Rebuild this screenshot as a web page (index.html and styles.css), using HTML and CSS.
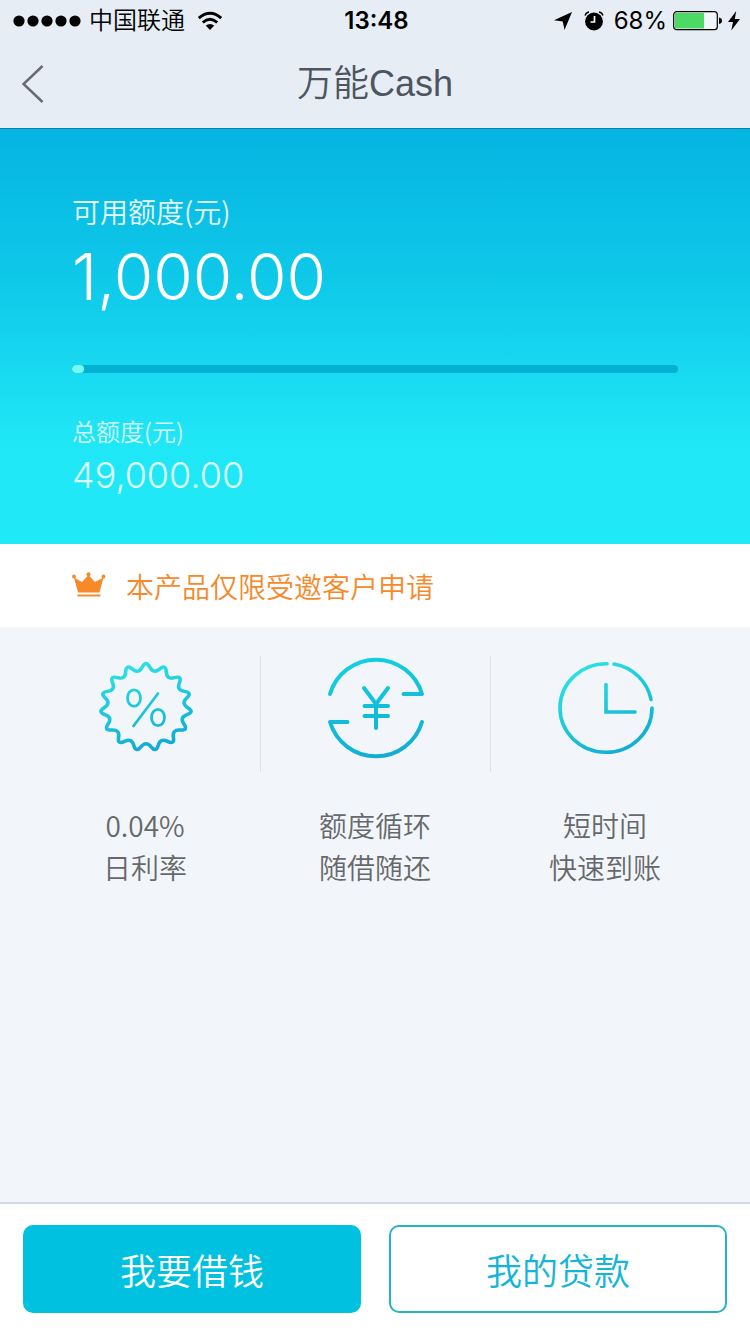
FILE: index.html
```html
<!DOCTYPE html>
<html lang="zh-CN">
<head>
<meta charset="utf-8">
<meta name="viewport" content="width=device-width, initial-scale=1">
<title>万能Cash</title>
<link rel="stylesheet" href="styles.css">
</head>
<body>
<header class="top">
  <div class="status">
    <div class="status-left">
      <svg class="signal" width="68" height="12" viewBox="0 0 68 12" aria-hidden="true"><circle cx="6" cy="6" r="5.6"/><circle cx="20" cy="6" r="5.6"/><circle cx="34" cy="6" r="5.6"/><circle cx="48" cy="6" r="5.6"/><circle cx="62" cy="6" r="5.6"/></svg>
      <span class="carrier">中国联通</span>
      <svg width="26" height="20" viewBox="0 0 26 20" aria-hidden="true"><g fill="none" stroke="#000" stroke-width="2.9"><path d="M1.8 7.2Q13-2.6 24.2 7.2"/><path d="M5.8 11.5Q13 5.2 20.2 11.5"/></g><path d="M8.8 14.6Q13 11.2 17.2 14.6L13 19Z"/></svg>
    </div>
    <time class="clock">13:48</time>
    <div class="status-right">
      <svg width="18" height="18" viewBox="0 0 18 18" aria-hidden="true"><path d="M18 0L10.500 18 8.800 9.400 0 8.200Z"/></svg>
      <svg class="alarm" width="20" height="20" viewBox="0 0 20 20" aria-hidden="true"><circle cx="10" cy="10.500" r="8.900"/><path d="M1 4.500Q2 1.500 5 1M15 1Q18 1.500 19 4.500" fill="none" stroke="#000" stroke-width="1.400"/><path d="M10.500 5V11H6.500" fill="none" stroke="#fff" stroke-width="1.700"/></svg>
      <span class="percent">68%</span>
      <svg class="battery" width="49" height="20" viewBox="0 0 49 20" aria-hidden="true"><rect x=".7" y=".7" width="43.600" height="18" rx="3" fill="#f0f6fa" stroke="#000" stroke-width="1.200"/><path d="M2 2H31V17.400H2Z" fill="#4cd964"/><path d="M46 6.500Q49 7 49 9.700T46 13Z"/></svg>
      <svg width="12" height="20" viewBox="0 0 12 20" aria-hidden="true"><path d="M8.200 0L0 11H5L3.300 19.500 12 8H6.800Z"/></svg>
    </div>
  </div>
  <nav class="nav">
    <button class="back" type="button" aria-label="返回"><svg width="22" height="38" viewBox="0 0 22 38" aria-hidden="true"><path d="M20.500 1L1.500 19 20.500 37" fill="none" stroke="#666b73" stroke-width="2.500"/></svg></button>
    <h1 class="title">万能Cash</h1>
  </nav>
</header>
<main class="main">
  <section class="hero">
    <label class="label" for="quota">可用额度(元)</label>
    <p class="amount">1,000.00</p>
    <progress class="bar" id="quota" max="49000" value="1000"></progress>
    <p class="label-small">总额度(元)</p>
    <p class="total">49,000.00</p>
  </section>
  <p class="notice">
    <svg width="34" height="28" viewBox="0 0 34 28" fill="#f68a2b" aria-hidden="true"><path d="M2 5.500L10 10 16.500 3 23 10 31.500 5.500 27.500 20.500H6Z"/><rect x="5.500" y="22.500" width="23" height="2"/><circle cx="2" cy="4.500" r="1.900"/><circle cx="16.500" cy="2.200" r="2"/><circle cx="31.500" cy="4.500" r="1.900"/></svg>
    <span>本产品仅限受邀客户申请</span>
  </p>
  <ul class="features">
    <li class="feature">
      <div class="picture"><svg width="104" height="104" viewBox="-52 -52 104 104" fill="none" stroke="url(#g1)" stroke-width="3.600" stroke-linecap="round" aria-hidden="true">
        <defs><linearGradient id="g1" gradientUnits="userSpaceOnUse" x1="-12" y1="-47" x2="12" y2="47"><stop stop-color="#2de1e5"/><stop offset="1" stop-color="#0fa9d3"/></linearGradient></defs>
        <path stroke-linejoin="round" transform="translate(0 -1) scale(1 .96)" d="M-3.700-41.600Q0-49 3.700-41.600Q7.300-34.200 13.600-39.500Q19.900-44.800 20.300-36.600Q20.600-28.300 28.500-30.600Q36.400-32.800 33.400-25.200Q30.300-17.500 38.500-16.300Q46.600-15.100 40.700-9.400Q34.800-3.700 41.800.7Q48.700 5.100 41 8Q33.300 10.800 37.900 17.700Q42.400 24.500 34.200 24Q26 23.400 27.400 31.500Q28.800 39.600 21.500 35.800Q14.200 32 12.200 40Q10.200 47.900 5.100 41.500Q0 35-5.100 41.500Q-10.200 47.900-12.200 40Q-14.200 32-21.500 35.800Q-28.800 39.600-27.400 31.500Q-26 23.400-34.200 24Q-42.400 24.500-37.900 17.700Q-33.300 10.800-41 8Q-48.700 5.100-41.800.7Q-34.800-3.700-40.700-9.400Q-46.600-15.100-38.500-16.300Q-30.300-17.500-33.400-25.200Q-36.400-32.800-28.500-30.600Q-20.600-28.300-20.300-36.600Q-19.900-44.800-13.600-39.500Q-7.300-34.200-3.700-41.600Z"/>
        <g stroke-width="2.800"><ellipse cx="-12" cy="-10" rx="6.500" ry="8.200"/><ellipse cx="12" cy="9.500" rx="6.500" ry="8.200"/><path d="M12-14.500L-12.500 18"/></g>
      </svg></div>
      <p>0.04%<br>日利率</p>
    </li>
    <li class="feature">
      <div class="picture"><svg width="104" height="104" viewBox="-52 -52 104 104" fill="none" stroke="url(#g2)" stroke-width="4" stroke-linecap="round" stroke-linejoin="round" aria-hidden="true">
        <defs><linearGradient id="g2" gradientUnits="userSpaceOnUse" x1="-10" y1="-48" x2="10" y2="48"><stop stop-color="#12cfe2"/><stop offset="1" stop-color="#12aed2"/></linearGradient></defs>
        <path d="M-46-14A48 48 0 0 1 46-14H27.500M46 14A48 48 0 0 1-46 14H-28.500M-12-20L0-4 12-20M0-4V20M-11.500-2H12M-11.500 8H12"/>
      </svg></div>
      <p>额度循环<br>随借随还</p>
    </li>
    <li class="feature">
      <div class="picture"><svg width="104" height="104" viewBox="-52 -52 104 104" fill="none" stroke="url(#g3)" stroke-width="3.600" stroke-linecap="round" aria-hidden="true">
        <defs><linearGradient id="g3" gradientUnits="userSpaceOnUse" x1="-22" y1="-40" x2="22" y2="42"><stop stop-color="#2bdfe5"/><stop offset="1" stop-color="#10add3"/></linearGradient></defs>
        <path d="M1-44.300A46 44.300 0 1 0 46 0M8-44A46 44.300 0 0 1 45-8.500M0-23.500V4H29" stroke-linejoin="miter"/>
      </svg></div>
      <p>短时间<br>快速到账</p>
    </li>
  </ul>
</main>
<footer class="actions">
  <button class="button primary" type="button">我要借钱</button>
  <button class="button outline" type="button">我的贷款</button>
</footer>
</body>
</html>
```
FILE: styles.css
```css
* { box-sizing: border-box; }
body {
  margin: 0;
  min-height: 100vh;
  display: flex;
  flex-direction: column;
  background: #f2f6fa;
  font-family: "Noto Sans CJK SC", sans-serif;
  font-weight: 350;
}
h1, p, ul { margin: 0; padding: 0; }
button { font: inherit; cursor: pointer; }
svg { display: block; flex: none; }
.top {
  background: #e6edf5;
  border-bottom: 1px solid #087fa5;
}
.status {
  display: grid;
  grid-template-columns: 1fr auto 1fr;
  align-items: center;
  height: 42px;
  padding: 0 10px 0 13px;
  font-family: Inter, "Noto Sans CJK SC", sans-serif;
  font-size: 24px;
  line-height: 42px;
  color: #000;
}
.status-left, .status-right { display: flex; align-items: center; }
.status-left { gap: 12px; }
.carrier { margin-left: -4px; }
.status-right { justify-content: flex-end; gap: 6px; }
.clock { font-weight: 600; }
.alarm { margin: 0 4px 0 6px; }
.percent { font-weight: 400; }
.nav {
  display: grid;
  grid-template-columns: 60px 1fr 60px;
  align-items: center;
  height: 86px;
  padding-bottom: 2px;
}
.back {
  height: 84px;
  padding: 0 0 0 22px;
  border: 0;
  background: none;
}
.title {
  font-family: "Liberation Sans", "Noto Sans CJK SC", sans-serif;
  font-size: 36px;
  font-weight: 350;
  line-height: 84px;
  text-align: center;
  color: #4d555f;
}
.main { flex: 1; }
.hero {
  display: flex;
  flex-direction: column;
  padding: 60px 72px 40px;
  background: linear-gradient(#05b4e1 0%, #10cbea 40%, #20e7f6 76%, #20e9f8 100%);
  color: #fff;
}
.label {
  font-size: 28px;
  line-height: 44px;
  opacity: .9;
}
.amount {
  font-family: Inter, sans-serif;
  font-size: 64px;
  line-height: 88px;
}
.bar {
  appearance: none;
  width: 100%;
  height: 8px;
  margin: 44px 0 42px;
  border: 0;
  border-radius: 4px;
  overflow: hidden;
  background: #05b1d0;
}
.bar::-webkit-progress-bar { background: #05b1d0; }
.bar::-webkit-progress-value { background: #74faf0; border-radius: 4px; }
.label-small {
  font-size: 24px;
  line-height: 32px;
  opacity: .8;
}
.total {
  font-family: Inter, sans-serif;
  font-size: 36px;
  line-height: 57px;
  opacity: .85;
}
.notice {
  display: flex;
  align-items: center;
  gap: 20px;
  height: 83px;
  padding: 0 72px;
  background: #fff;
  font-size: 28px;
  color: #f68a2b;
}
.features {
  display: grid;
  grid-template-columns: repeat(3, 1fr);
  padding: 29px 30px;
  list-style: none;
}
.feature {
  font-size: 28px;
  line-height: 42px;
  text-align: center;
  color: #66696b;
}
.picture {
  display: flex;
  justify-content: center;
  height: 116px;
  margin-bottom: 32px;
  border-left: 1px solid #dde1e5;
}
.feature:first-child .picture { border-color: transparent; }
.actions {
  display: grid;
  grid-template-columns: 1fr 1fr;
  gap: 28px;
  padding: 21px 23px;
  background: #fff;
  border-top: 2px solid #d6d9dc;
}
.button {
  height: 88px;
  border: 2px solid #00c1df;
  border-radius: 10px;
  font-size: 36px;
}
.primary { background: #00c1df; color: #fff; }
.outline { background: #fff; border-color: #27b3c5; color: #13b5d8; }
```
